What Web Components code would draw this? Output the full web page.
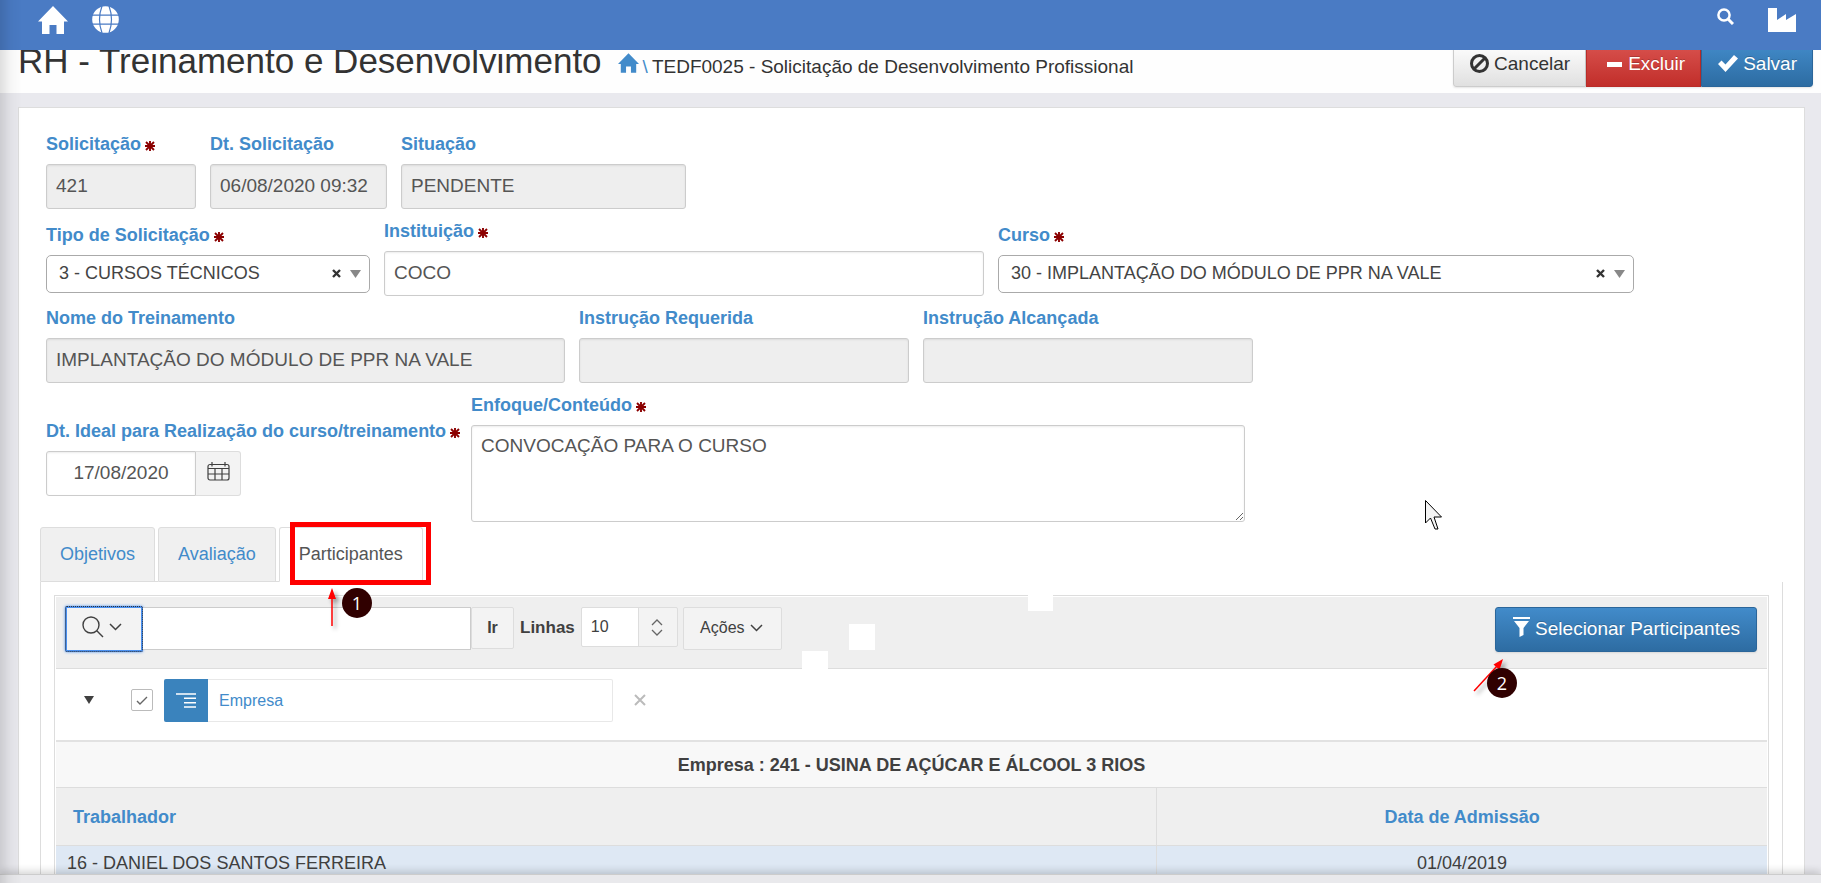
<!DOCTYPE html>
<html lang="pt-BR">
<head>
<meta charset="utf-8">
<title>RH - Treinamento e Desenvolvimento</title>
<style>
  body {
    margin: 0;
    font-family: "Liberation Sans", Arial, sans-serif;
    font-size: 18px;
    color: #404040;
    background: #e9e9ee;
  }
</style>
</head>
<body>
<training-page></training-page>

<script>
  // Base class: each element renders its own template in an open shadow root.
  class Part extends HTMLElement {
    connectedCallback() {
      if (this.shadowRoot) return;
      const root = this.attachShadow({ mode: "open" });
      const t = document.createElement("template");
      t.innerHTML = `<style>
        *, *::before, *::after { box-sizing: border-box; }
        :host { display: block; box-sizing: border-box; }
        button, input, select, textarea { font-family: inherit; color: inherit; margin: 0; }
        a { text-decoration: none; color: inherit; }
        svg { display: block; flex: none; }
      </style>` + this.view();
      root.append(t.content.cloneNode(true));
    }
    attr(name) { return this.getAttribute(name) || ""; }
  }

  const HOUSE = "M15 0 30 15.500H26V28H18.500V19H11.500V28H4V15.500H0Z";

  customElements.define("app-header", class extends Part {
    view() { return `<style>
        :host { position: fixed; top: 0; left: 0; right: 0; z-index: 5; height: 50px; background: #4a7bc4; }
        nav { display: flex; align-items: flex-start; gap: 24px; padding: 6px 25px 0 38px; }
        .space { flex: 1; }
        .search { margin-top: 2px; margin-right: 10px; }
        .plant { margin-top: 2px; }
      </style>
      <nav>
        <a href="#" aria-label="Início"><svg width="30" height="28" viewBox="0 0 30 28" fill="#fff"><path d="${HOUSE}"/></svg></a>
        <a href="#" aria-label="Idioma"><svg width="27" height="27" viewBox="0 0 27 27"><circle cx="13.500" cy="13.500" r="13.300" fill="#fff"/><g fill="none" stroke="#4a7bc4" stroke-width="1.200"><path d="M0 9.200H27M0 18.200H27M10 0Q5 13.500 10 27M17 0Q22 13.500 17 27"/></g></svg></a>
        <span class="space"></span>
        <a href="#" class="search" aria-label="Buscar"><svg width="17" height="17" viewBox="0 0 17 17" fill="none" stroke="#fff"><circle cx="7" cy="7" r="5.600" stroke-width="2.500"/><path d="M11 11l5 5" stroke-width="3"/></svg></a>
        <a href="#" class="plant" aria-label="Empresa"><svg width="28" height="24" viewBox="0 0 28 24" fill="#fff"><path d="M0 0H9V12L18 6V12L28 6V24H0Z"/></svg></a>
      </nav>`; }
  });

  customElements.define("action-button", class extends Part {
    view() {
      const icons = {
        ban: `<svg width="19" height="19" viewBox="0 0 19 19" fill="none" stroke="currentColor" stroke-width="3"><circle cx="9.500" cy="9.500" r="8"/><path d="M4 15L15 4"/></svg>`,
        minus: `<svg width="15" height="19" viewBox="0 0 15 19"><path d="M0 8H15V13H0Z" fill="currentColor"/></svg>`,
        check: `<svg width="20" height="19" viewBox="0 0 20 19"><path d="M0 10L3.500 6.500L7.500 10.500L16 1L20 4.500L7.500 18Z" fill="currentColor"/></svg>`,
        funnel: `<svg width="17" height="20" viewBox="0 0 17 20" fill="currentColor"><path d="M0 0H17V2H0ZM1 4H16L10.500 11V18L6.500 20V11Z"/></svg>`
      };
      return `<style>
        button { height: 45px; width: 100%; display: flex; align-items: center; gap: 5px; padding: 0 15px 2px 16px;
          font-size: 19px; line-height: 24px; border: 1px solid #ccc; white-space: nowrap;
          border-radius: var(--corner, 3px); background: linear-gradient(#fff, #e0e0e0); color: #333;
          box-shadow: 0 1px 2px rgba(0,0,0,.1); }
        :host([kind=danger]) button { background: linear-gradient(#d9534f, #c12e2a); color: #fff; border-color: #b92c28;
          text-shadow: 0 -1px 0 rgba(0,0,0,.2); gap: 6px; padding-left: 20px; }
        :host([kind=primary]) button { background: linear-gradient(#428bca, #2d6ca2); color: #fff; border-color: #2b669a;
          text-shadow: 0 -1px 0 rgba(0,0,0,.2); }
        :host([icon=funnel]) button { padding-left: 17px; padding-right: 16px; }
        :host([icon=funnel]) svg { margin-bottom: 4px; }
      </style>
      <button type="button">${icons[this.attr("icon")]}<slot></slot></button>`;
    }
  });

  customElements.define("page-title", class extends Part {
    view() { return `<style>
        :host { display: flex; justify-content: space-between; background: #fefefe; padding: 5px 8px 6px 18px; min-height: 57px; }
        .left { display: flex; align-items: baseline; gap: 16px; align-self: flex-start; color: #333; }
        h1 { margin: 0; font-size: 35px; line-height: 40px; font-weight: normal; }
        .crumb { display: flex; align-items: baseline; gap: 4px; font-size: 19px; line-height: 24px; }
        .crumb a { display: flex; gap: 4px; align-items: baseline; color: #428bca; }
        .crumb svg { width: 21px; height: 20px; }
        .acts { display: flex; align-self: flex-end; }
      </style>
      <div class="left">
        <h1>RH - Treinamento e Desenvolvimento</h1>
        <div class="crumb">
          <a href="#"><svg viewBox="0 0 30 28" fill="#428bca"><path d="${HOUSE}"/></svg>\\</a>
          <span>TEDF0025 - Solicitação de Desenvolvimento Profissional</span>
        </div>
      </div>
      <div class="acts">
        <action-button icon="ban" style="--corner:3px 0 0 3px">Cancelar</action-button>
        <action-button icon="minus" kind="danger" style="--corner:0">Excluir</action-button>
        <action-button icon="check" kind="primary" style="--corner:0 3px 3px 0">Salvar</action-button>
      </div>`; }
  });

  customElements.define("form-field", class extends Part {
    view() {
      const type = this.attr("type") || "text", v = this.attr("value");
      const ro = this.hasAttribute("readonly") ? "readonly" : "";
      const control = {
        text: `<input id="c" type="text" value="${v}" ${ro}>`,
        area: `<textarea id="c">${v}</textarea>`,
        date: `<div class="group"><input id="c" type="text" value="${v}"><button type="button" aria-label="Calendário">
          <svg width="23" height="19" viewBox="0 0 23 19" fill="none" stroke="#404040" stroke-width="1.200"><rect x="1" y="2.500" width="21" height="15.500" rx="2"/><path d="M1 6.500H22M1 12H22M8 6.500V18M15 6.500V18M5 0V4.500M18 0V4.500"/></svg></button></div>`,
        select: `<div class="pick"><select id="c"><option>${v}</option></select><button type="button" aria-label="Limpar"><svg width="9" height="9" viewBox="0 0 9 9" stroke="#333" stroke-width="2.400"><path d="M1 1L8 8M8 1L1 8"/></svg></button><svg width="11" height="8" viewBox="0 0 11 8"><path d="M0 0H11L5.500 8Z" fill="#888"/></svg></div>`
      }[type];
      const star = this.hasAttribute("required") ? `<svg width="10" height="10" viewBox="0 0 10 10" stroke="#8b0000" stroke-width="1.900"><path d="M5 0V10M0 5H10M1 1L9 9M9 1L1 9"/></svg>` : "";
      return `<style>
        :host { flex: none; }
        label { display: flex; align-items: center; gap: 4px; font-size: 18px; line-height: 24px; font-weight: bold; color: #428bca; margin-bottom: 8px; white-space: nowrap; }
        label svg { margin-top: 4px; }
        input, textarea { display: block; width: 100%; height: 45px; border: 1px solid #ccc; border-radius: 3px; padding: 0 9px 2px;
          font-size: 19px; line-height: 24px; color: #555; background: #fff; box-shadow: inset 0 1px 2px rgba(0,0,0,.08); outline: 0; }
        input[readonly] { background: #eee; }
        textarea { height: 97px; padding: 8px 9px; }
        .group { display: flex; }
        .group input { width: 150px; text-align: center; border-radius: 3px 0 0 3px; }
        .group button { width: 45px; height: 45px; border: 1px solid #ddd; border-left: 0; border-radius: 0 3px 3px 0; background: #f3f3f3; display: grid; place-items: center; padding: 0 0 4px; }
        .pick { height: 38px; display: flex; align-items: center; border: 1px solid #aaa; border-radius: 5px; padding: 0 8px 0 12px; background: #fff; }
        .pick select { flex: 1; min-width: 0; appearance: none; border: 0; padding: 0 0 2px; background: none; font-size: 18px; line-height: 24px; color: #444; height: 36px; }
        .pick button { border: 0; background: none; padding: 0; margin-right: 9px; }
      </style>
      <label for="c">${this.attr("label")}${star}</label>${control}`;
    }
  });

  customElements.define("step-note", class extends Part {
    view() { return `<style>
        :host { position: absolute; z-index: 3; width: 30px; height: 30px; border-radius: 50%; background: #300000; color: #fff;
          font: 18px/30px "Open Sans", sans-serif; text-align: center; }
      </style><slot></slot>`; }
  });

  customElements.define("tab-strip", class extends Part {
    view() { return `<style>
        nav { display: flex; gap: 3px; }
        a { position: relative; z-index: 1; height: 55px; border: 1px solid #ddd; border-radius: 3px 3px 0 0; background: #f0f0f0; color: #428bca;
          font-size: 18px; line-height: 24px; padding: 14px 19px; white-space: nowrap; }
        a:not([aria-selected])::after { content: ""; position: absolute; left: 100%; bottom: -1px; width: 4px; height: 1px; background: #ddd; }
        a[aria-selected=true] { color: #555; background: #fff; border-bottom-color: #fff; }
        .frame { position: absolute; inset: -6px -9px -4px 10px; border: 5px solid #f00; }
        step-note { top: 60px; left: 62px; }
        .arrow { position: absolute; left: 47px; top: 60px; overflow: visible; filter: drop-shadow(3px 3px 2px rgba(0,0,0,.4)); }
        section { border: solid #ddd; border-width: 0 1px; padding: 13px 13px 0; }
      </style>
      <nav role="tablist">
        <a href="#" role="tab">Objetivos</a>
        <a href="#" role="tab">Avaliação</a>
        <a href="#" role="tab" aria-selected="true">Participantes<span class="frame"></span>
          <svg class="arrow" width="10" height="38" viewBox="0 0 10 38"><path d="M5 8V38" stroke="#f00" stroke-width="1.500"/><path d="M5 0L9 11H1Z" fill="#f00"/></svg>
          <step-note>1</step-note></a>
      </nav>
      <section role="tabpanel"><slot></slot></section>`; }
  });

  customElements.define("report-toolbar", class extends Part {
    view() {
      const down = `<svg width="13" height="8" viewBox="0 0 13 8" fill="none" stroke="#404040" stroke-width="1.500"><path d="M1 1L6.500 6.500L12 1"/></svg>`;
      return `<style>
        :host { position: relative; display: flex; align-items: flex-start; height: 72px; padding: 10px 10px 0 9px; background: #efefef; border-bottom: 1px solid #ddd; font-size: 16px; }
        button { font-size: 16px; line-height: 24px; border: 1px solid #ddd; background: #f3f3f3; border-radius: 2px; padding: 0; display: flex; align-items: center; justify-content: center; }
        .find { width: 78px; height: 46px; margin-top: -1px; gap: 5px; border: 2px solid #4a90f0; outline: 1px dotted #333; outline-offset: -1px; box-shadow: 0 0 3px #4a90f0; padding: 0 4px 5px 0; }
        .query { width: 328px; height: 43px; border: 1px solid #ccc; border-left: 0; background: #fff; font-size: 16px; }
        .go { width: 43px; height: 42px; font-weight: bold; }
        label { font-size: 17px; font-weight: bold; line-height: 24px; margin: 9px 6px 0; }
        .rows { display: flex; position: relative; width: 97px; height: 40px; border: 1px solid #ddd; border-radius: 2px; background: linear-gradient(90deg, #fff 56px, #ddd 56px, #ddd 57px, #f3f3f3 57px); }
        .rows select { appearance: none; width: 100%; border: 0; background: none; padding: 0 9px 2px; font-size: 16px; }
        .rows svg { position: absolute; right: 14px; top: 11px; pointer-events: none; }
        .acts { width: 99px; height: 43px; margin-left: 5px; gap: 5px; padding: 0 2px 2px 0; }
        .space { flex: 1; }
        i { position: absolute; width: 26px; height: 26px; background: #fff; }
        .i1 { left: 746px; top: 54px; height: 18px; }
        .i2 { left: 793px; top: 27px; }
        .i3 { left: 972px; top: -2px; width: 25px; height: 16px; }
        step-note { right: 250px; top: 71px; }
        .arrow { position: absolute; right: 264px; top: 62px; z-index: 2; overflow: visible; filter: drop-shadow(3px 3px 2px rgba(0,0,0,.4)); }
      </style>
      <button type="button" class="find" aria-label="Pesquisar"><svg width="22" height="22" viewBox="0 0 22 22" fill="none" stroke="#404040" stroke-width="1.400"><circle cx="9" cy="9" r="8"/><path d="M14.800 14.800L21 21"/></svg>${down}</button>
      <input class="query" type="text" aria-label="Texto da pesquisa">
      <button type="button" class="go">Ir</button>
      <label for="rows">Linhas</label>
      <div class="rows"><select id="rows"><option>10</option></select><svg width="12" height="17" viewBox="0 0 12 17" fill="none" stroke="#666" stroke-width="1.300"><path d="M1 6L6 1L11 6M1 11L6 16L11 11"/></svg></div>
      <button type="button" class="acts">Ações${down}</button>
      <span class="space"></span>
      <action-button icon="funnel" kind="primary">Selecionar Participantes</action-button>
      <i class="i1"></i><i class="i2"></i><i class="i3"></i>
      <svg class="arrow" width="29" height="32" viewBox="0 0 29 32"><path d="M0 32L24 6" stroke="#f00" stroke-width="1.500"/><path d="M29 0L25.500 11L19.500 5.500Z" fill="#f00"/></svg>
      <step-note>2</step-note>`;
    }
  });

  customElements.define("report-filter", class extends Part {
    view() { return `<style>
        :host { display: flex; align-items: center; height: 73px; padding: 0 28px 9px; border-bottom: 2px solid #e2e2e2; background: #fff; }
        button { border: 0; background: none; padding: 0; }
        .check { display: grid; place-items: center; margin-left: 37px; margin-right: 11px; }
        .check > * { grid-area: 1 / 1; }
        input { appearance: none; width: 22px; height: 22px; border: 1px solid #bbb; border-radius: 2px; background: #fff; }
        .check svg { z-index: 1; pointer-events: none; }
        .chip { display: flex; width: 449px; height: 43px; border: 1px solid #e8e8e8; border-left: 0; border-radius: 2px; margin-right: 21px; }
        .mark { width: 44px; margin: -1px 0; background: #3a83bd; display: grid; place-items: center; border-radius: 2px 0 0 2px; }
        a { color: #428bca; font-size: 16px; line-height: 24px; padding: 9px 11px; }
      </style>
      <button type="button" aria-label="Recolher"><svg width="10" height="8" viewBox="0 0 10 8"><path d="M0 0H10L5 8Z" fill="#404040"/></svg></button>
      <label class="check"><input type="checkbox" checked aria-label="Ativar quebra"><svg width="12" height="9" viewBox="0 0 12 9" fill="none" stroke="#666" stroke-width="1.400"><path d="M1 5L4 8L11 1"/></svg></label>
      <div class="chip"><span class="mark"><svg width="20" height="15" viewBox="0 0 20 15" stroke="#fff" stroke-width="1.600"><path d="M0 1H20M8 5.300H20M8 9.700H20M8 14H20"/></svg></span><a href="#">Empresa</a></div>
      <button type="button" aria-label="Remover"><svg width="12" height="12" viewBox="0 0 12 12" stroke="#bbb" stroke-width="2"><path d="M1 1L11 11M11 1L1 11"/></svg></button>`; }
  });

  customElements.define("report-table", class extends Part {
    view() { return `<style>
        table { width: 100%; border-collapse: separate; border-spacing: 0; table-layout: fixed; }
        col:first-child { width: 64.300%; }
        th, td { line-height: 24px; padding: 0 11px; border-bottom: 1px solid #ddd; text-align: center; white-space: nowrap; }
        .band th { height: 46px; background: #f8f8f8; font-size: 18px; }
        .head th { height: 58px; background: #efefef; color: #428bca; font-size: 18px; }
        .head th + th, td + td { border-left: 1px solid #ddd; }
        .head th:first-child { text-align: left; padding-left: 17px; }
        td { height: 38px; background: #dee8f4; font-size: 18px; border-bottom: 0; padding-bottom: 4px; }
        td:first-child { text-align: left; }
      </style>
      <table>
        <colgroup><col><col></colgroup>
        <thead>
          <tr class="band"><th colspan="2">Empresa : 241 - USINA DE AÇÚCAR E ÁLCOOL 3 RIOS</th></tr>
          <tr class="head"><th>Trabalhador</th><th>Data de Admissão</th></tr>
        </thead>
        <tbody><tr><td>16 - DANIEL DOS SANTOS FERREIRA</td><td>01/04/2019</td></tr></tbody>
      </table>`; }
  });

  customElements.define("training-page", class extends Part {
    view() { return `<style>
        :host { position: relative; height: 100vh; overflow: hidden; padding-top: 36px; }
        main { margin: 14px 16px 0 18px; border: 1px solid #ddd; background: #fff; padding: 24px 21px 0; min-height: 100vh; }
        form { display: grid; gap: 10px; padding: 0 6px; margin-bottom: 5px; }
        .row { display: flex; align-items: center; gap: 14px; }
        .report { border: 1px solid #ddd; padding: 1px; min-height: 320px; }
        .edge { position: absolute; z-index: 6; inset: 0 auto 0 0; width: 22px; background: linear-gradient(90deg, rgba(0,0,0,.12), rgba(0,0,0,.03) 50%, transparent); pointer-events: none; }
        .cursor { position: absolute; z-index: 4; left: 1425px; top: 500px; }
        footer { position: fixed; z-index: 4; left: 0; right: 0; bottom: 0; height: 9px; background: #e9e9ec; border-top: 1px solid #ccc; box-shadow: 0 -2px 8px rgba(0,0,0,.2); }
        form-field { width: var(--w); }
      </style>
      <app-header></app-header>
      <page-title></page-title>
      <main>
        <form>
          <div class="row">
            <form-field label="Solicitação" required readonly value="421" style="--w:150px"></form-field>
            <form-field label="Dt. Solicitação" readonly value="06/08/2020 09:32" style="--w:177px"></form-field>
            <form-field label="Situação" readonly value="PENDENTE" style="--w:285px"></form-field>
          </div>
          <div class="row">
            <form-field label="Tipo de Solicitação" type="select" required value="3 - CURSOS TÉCNICOS" style="--w:324px"></form-field>
            <form-field label="Instituição" required value="COCO" style="--w:600px"></form-field>
            <form-field label="Curso" type="select" required value="30 - IMPLANTAÇÃO DO MÓDULO DE PPR NA VALE" style="--w:636px"></form-field>
          </div>
          <div class="row">
            <form-field label="Nome do Treinamento" readonly value="IMPLANTAÇÃO DO MÓDULO DE PPR NA VALE" style="--w:519px"></form-field>
            <form-field label="Instrução Requerida" readonly style="--w:330px"></form-field>
            <form-field label="Instrução Alcançada" readonly style="--w:330px"></form-field>
          </div>
          <div class="row">
            <form-field label="Dt. Ideal para Realização do curso/treinamento" type="date" required value="17/08/2020" style="--w:411px"></form-field>
            <form-field label="Enfoque/Conteúdo" type="area" required value="CONVOCAÇÃO PARA O CURSO" style="--w:774px"></form-field>
          </div>
        </form>
        <tab-strip>
          <div class="report">
            <report-toolbar></report-toolbar>
            <report-filter></report-filter>
            <report-table></report-table>
          </div>
        </tab-strip>
      </main>
      <span class="edge"></span>
      <svg class="cursor" width="18" height="31" viewBox="0 0 18 31"><path d="M.500 .500V23L5.500 18L10 29H13L9 17H16.500Z" fill="#f4f4f4" stroke="#000"/></svg>
      <footer></footer>`; }
  });
</script>
</body>
</html>
